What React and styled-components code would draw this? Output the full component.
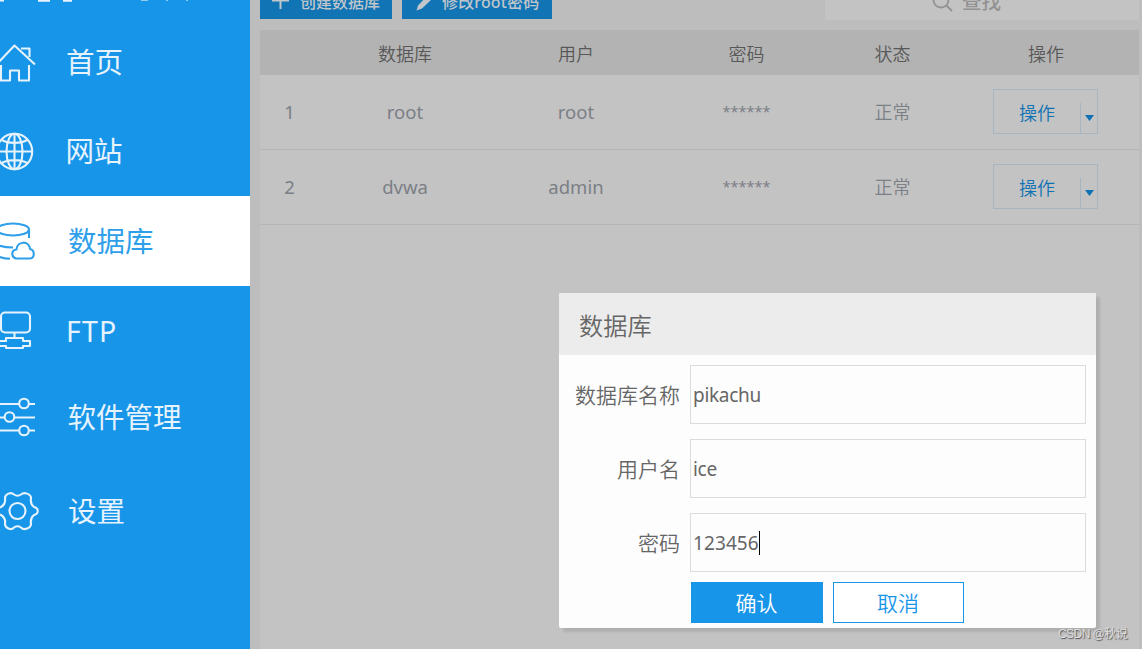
import React from "react";
import styled, { createGlobalStyle } from "styled-components";

const Global = createGlobalStyle`
  *{box-sizing:border-box}
  body{margin:0;overflow:hidden;background:#bdbdbd;font-family:"Noto Sans","Noto Sans CJK SC",sans-serif;font-weight:350}
  button,input{font:inherit;margin:0}
`;
const Page = styled.div`display:flex;width:1142px;height:649px;overflow:hidden;position:relative;`;
const Sidebar = styled.nav`width:250px;flex:none;background:#1695e9;color:#fff;`;
const Logo = styled.div`height:16px;overflow:hidden;svg{display:block}`;
const NavItem = styled.div`
  height:90px;display:flex;align-items:center;
  background:${p => (p.$active ? "#fff" : "transparent")};
  color:${p => (p.$active ? "#2f9fe9" : "#e6f3fd")};
  padding-bottom:${p => p.$lift || 0}px;
  svg{flex:none;width:42px;height:42px;overflow:visible}
`;
const NavLabel = styled.span`
  margin-left:${p => p.$gap}px;font-size:28.5px;line-height:40px;font-weight:400;white-space:nowrap;
  letter-spacing:${p => p.$track || 0}px;padding-top:${p => p.$drop || 0}px;
`;
const Main = styled.main`flex:1;min-width:0;padding:0 3px 0 10px;display:flex;flex-direction:column;`;
const Toolbar = styled.div`height:30px;display:flex;gap:10px;align-items:flex-start;`;
const ToolButton = styled.button`
  height:19px;width:${p => p.$w}px;border:0;background:#1174b5;color:#c0c6ca;padding:0 0 0 12px;
  display:flex;gap:${p => p.$gap}px;align-items:flex-start;overflow:hidden;
  font-size:16px;line-height:22px;font-weight:500;white-space:nowrap;
  svg{flex:none;margin-top:-8px}
  span{margin-top:-9px;letter-spacing:${p => p.$track || 0}px}
`;
const Search = styled.div`
  margin-left:auto;width:314px;height:20px;background:#c3c3c3;color:#929292;display:flex;gap:9px;
  padding-left:107px;overflow:hidden;font-size:19.5px;line-height:24px;font-weight:500;
  svg{flex:none;margin-top:-9px}
  span{margin-top:-10px}
`;
const Table = styled.section`flex:1;background:#c3c3c3;`;
const Row = styled.div`
  display:grid;grid-template-columns:59px 172px 170px 171px 121px 186px;align-items:center;text-align:center;
  height:75px;font-size:18px;color:#7b7f86;border-bottom:1px solid #b5b5b5;padding-bottom:2px;
`;
const HeadRow = styled(Row)`height:45px;background:#b3b3b3;color:#585858;border:0;padding:2px 0 0;line-height:24px;`;
const Latin = styled.span`font-weight:400;font-size:18.5px;letter-spacing:${p => p.$track || 0}px;`;
const Mask = styled.span`font-size:14.5px;font-weight:400;padding-bottom:1px;`;
const Split = styled.div`
  width:105px;height:45px;margin-left:40px;border:1px solid #a6b5bf;display:flex;align-items:flex-end;color:#0f72b4;
`;
const SplitLabel = styled.span`width:86px;line-height:43px;padding-top:2px;font-size:18px;align-self:flex-start;`;
const SplitArrow = styled.span`
  flex:1;height:30px;border-left:1px solid #a6b5bf;display:flex;justify-content:center;padding-top:12px;
  svg{display:block}
`;
const Dialog = styled.form`
  position:absolute;left:559px;top:293px;width:537px;height:335px;background:#fdfdfd;border-radius:2px;
  box-shadow:4px 4px 3px rgba(0,0,0,.1);color:#666;
`;
const DialogTitle = styled.h2`
  margin:0;height:62px;line-height:65px;padding-left:20px;background:#ececec;border-radius:2px;font-size:24.2px;font-weight:350;
`;
const Fields = styled.div`display:flex;flex-direction:column;gap:15px;padding:10px 10px 0 0;`;
const Field = styled.label`display:flex;height:59px;align-items:center;`;
const FieldName = styled.span`width:121px;margin-right:10px;padding-bottom:2px;text-align:right;font-size:21px;`;
const Input = styled.div`
  flex:1;height:59px;border:1px solid #dcdcdc;padding-left:2px;display:flex;align-items:center;
  font-size:19px;font-weight:400;letter-spacing:${p => p.$track || 0}px;
`;
const Caret = styled.i`width:1px;height:24px;background:#000;`;
const Actions = styled.div`display:flex;gap:10px;padding:10px 0 0 132px;`;
const Action = styled.button`
  width:${p => (p.$primary ? 132 : 131)}px;height:41px;padding:0 1px 0 0;border:1px solid #1695e9;font-size:21px;line-height:38px;
  background:${p => (p.$primary ? "#1695e9" : "#fff")};color:${p => (p.$primary ? "#fff" : "#1695e9")};
`;
const Watermark = styled.div`
  position:absolute;left:1058px;top:626px;font:400 12px/16px "Liberation Sans","Noto Sans CJK SC",sans-serif;
  letter-spacing:-.55px;color:#ddd;text-shadow:1px 1px 1px #555;white-space:nowrap;
`;

const paths = {
  home: <><path d="M-3 24 14.5 5.500 35 24.500M1 25V40.500H10V30.500H19V40.500H29V25M21 8.500H29.500V17" /></>,
  globe: <><circle cx="14.500" cy="21.500" r="17.700" /><ellipse cx="14.500" cy="21.500" rx="8" ry="17.700" /><path d="M14.500 3.500V39.500M-3.500 21.500H32.500M1 9.500C8 14 21 14 28 9.500M1 33.500C8 29 21 29 28 33.500" /></>,
  db: <><ellipse cx="13" cy="9.500" rx="16" ry="6" /><path d="M29 9.500V18M-3 25Q4 27.500 13 27.500M-3 36Q3 38.500 10 38.800M16 38.500C11 37 11 30 16.500 29.500C17 21 29 20 30 29C35 30 35 38 30 38.500Z" /></>,
  ftp: <><rect x="1" y="2.500" width="29" height="20" rx="4" /><path d="M14.500 22.500V28M6 28H23V31H30V36H23V38H6V36H-1V31H6Z" /></>,
  sliders: <><path d="M-2 8H19M29 8H35M-2 21.500H4M14 21.500H35M-2 34.500H19M29 34.500H35" /><circle cx="24" cy="7.500" r="4.800" /><circle cx="9.500" cy="21" r="4.800" /><circle cx="24" cy="34.500" r="4.800" /></>,
  gear: <><circle cx="17.500" cy="21" r="8" /><path d="M14 4.500Q17.500 7 21 4.500C24 1.500 31 4 31 8Q30 14 34 17C39 18 39 24 34 25Q30 28 31 34C31 38 24 41 21 37.500Q17.500 35 14 37.500C11 41 5 38 5 34Q6 28 1 25C-4 24 -4 18 1 17Q6 14 5 8C5 4 11 1.500 14 4.500Z" /></>,
};
const items = [
  { icon: "home", label: "首页", gap: 24, drop: 2 },
  { icon: "globe", label: "网站", gap: 23.5 },
  { icon: "db", label: "数据库", gap: 26 },
  { icon: "ftp", label: "FTP", gap: 24, track: 1.2 },
  { icon: "sliders", label: "软件管理", gap: 25.5, lift: 8 },
  { icon: "gear", label: "设置", gap: 26 },
];
const Icon = ({ name }) => <svg viewBox="0 0 42 42" fill="none" stroke="currentColor" strokeWidth="2.100" strokeLinejoin="round">{paths[name]}</svg>;

const rows = [["1", "root", "root"], ["2", "dvwa", "admin"]];

export default function App() {
  return (
    <Page>
      <Global />
      <Sidebar>
        <Logo><svg width="200" height="4" fill="none" stroke="#e8f4fd" strokeWidth="2"><path d="M0 .5H4M38 .8H50M63 .8H72" /><path d="M141 0H148M167 0V1M187 0V1" opacity=".6" /></svg></Logo>
        {items.map(({ icon, label, gap, lift, track, drop }) => (
          <NavItem key={icon} $active={icon === "db"} $lift={lift}>
            <Icon name={icon} /><NavLabel $gap={gap} $track={track} $drop={drop}>{label}</NavLabel>
          </NavItem>
        ))}
      </Sidebar>
      <Main>
        <Toolbar>
          <ToolButton $w={132} $gap={11}>
            <svg width="17" height="17" stroke="currentColor" strokeWidth="2"><path d="M8.500 0V17M0 8.500H17" /></svg><span>创建数据库</span>
          </ToolButton>
          <ToolButton $w={150} $gap={10} $track={0.15}>
            <svg width="18" height="19" fill="currentColor"><path d="M2.500 18.500 4 13.500 14 3 18 7 8 16.500Z" /></svg><span>修改root密码</span>
          </ToolButton>
          <Search>
            <svg width="21" height="21" fill="none" stroke="currentColor" strokeWidth="1.8"><circle cx="9" cy="9" r="7.500" /><path d="m14 14 6 6" /></svg><span>查找</span>
          </Search>
        </Toolbar>
        <Table>
          <HeadRow><span /><span>数据库</span><span>用户</span><span>密码</span><span>状态</span><span>操作</span></HeadRow>
          {rows.map(([n, db, user]) => (
            <Row key={n}>
              <Latin>{n}</Latin><Latin>{db}</Latin><Latin>{user}</Latin><Mask>******</Mask><span>正常</span>
              <Split>
                <SplitLabel>操作</SplitLabel>
                <SplitArrow><svg width="9" height="6" fill="currentColor"><path d="M0 0H9L4.500 6Z" /></svg></SplitArrow>
              </Split>
            </Row>
          ))}
        </Table>
      </Main>
      <Dialog>
        <DialogTitle>数据库</DialogTitle>
        <Fields>
          <Field><FieldName>数据库名称</FieldName><Input $track={-0.3}>pikachu</Input></Field>
          <Field><FieldName>用户名</FieldName><Input $track={-0.3}>ice</Input></Field>
          <Field><FieldName>密码</FieldName><Input $track={0.1}>123456<Caret /></Input></Field>
        </Fields>
        <Actions><Action type="button" $primary>确认</Action><Action type="button">取消</Action></Actions>
      </Dialog>
      <Watermark>CSDN @秋说</Watermark>
    </Page>
  );
}
